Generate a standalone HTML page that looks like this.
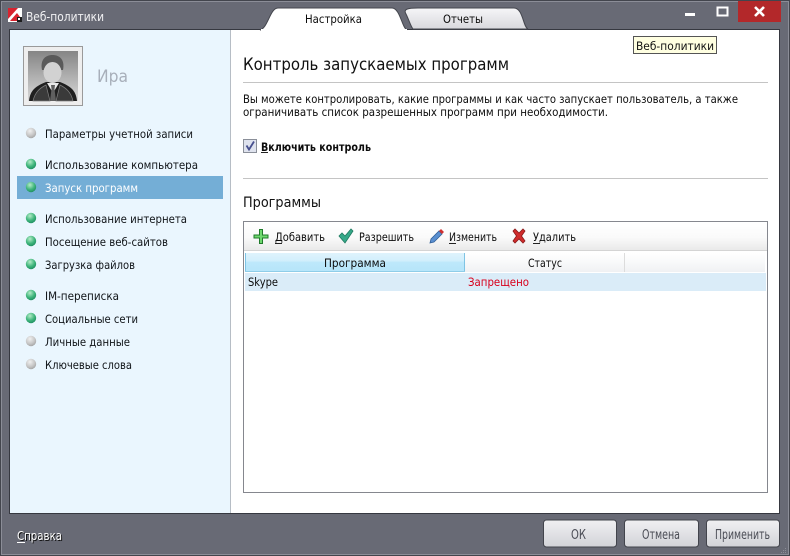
<!DOCTYPE html>
<html><head><meta charset="utf-8"><style>
html,body{margin:0;padding:0;background:#686a75}
svg{display:block}
text{font-family:"DejaVu Sans","Liberation Sans",sans-serif;font-size:11.5px;fill:#0c0c0c}
.s text{fill:#101418}
</style></head><body>
<svg width="790" height="556" viewBox="0 0 790 556" xmlns="http://www.w3.org/2000/svg">
<defs>
<radialGradient id="g" cx=".4" cy=".3" r=".8"><stop offset="0" stop-color="#b5ecc8"/><stop offset=".55" stop-color="#3fb57c"/><stop offset="1" stop-color="#16855a"/></radialGradient>
<radialGradient id="w" cx=".4" cy=".3" r=".8"><stop offset="0" stop-color="#f0f0f0"/><stop offset=".6" stop-color="#c4c4c4"/><stop offset="1" stop-color="#9a9a9a"/></radialGradient>
<linearGradient id="tb" x1="0" y1="0" x2="0" y2="1"><stop offset="0" stop-color="#fff"/><stop offset=".55" stop-color="#fafafa"/><stop offset="1" stop-color="#e9e9e9"/></linearGradient>
<linearGradient id="hs" x1="0" y1="0" x2="0" y2="1"><stop offset="0" stop-color="#dff3fc"/><stop offset=".4" stop-color="#d2effc"/><stop offset=".5" stop-color="#bde8fb"/><stop offset="1" stop-color="#b6e5fa"/></linearGradient>
<linearGradient id="hn" x1="0" y1="0" x2="0" y2="1"><stop offset="0" stop-color="#fff"/><stop offset=".5" stop-color="#f8f9fa"/><stop offset="1" stop-color="#f0f1f3"/></linearGradient>
<linearGradient id="tab2" x1="0" y1="0" x2="0" y2="1"><stop offset="0" stop-color="#f6f6f8"/><stop offset="1" stop-color="#d8d8dd"/></linearGradient>
<linearGradient id="btn" x1="0" y1="0" x2="0" y2="1"><stop offset="0" stop-color="#f0f0f2"/><stop offset="1" stop-color="#d2d3d8"/></linearGradient>
<linearGradient id="av" x1="0" y1="0" x2="0" y2="1"><stop offset="0" stop-color="#858585"/><stop offset="1" stop-color="#d8d8d8"/></linearGradient>
</defs>

<!-- window frame -->
<rect width="790" height="556" fill="#686a75"/>
<rect x=".5" y=".5" width="789" height="555" fill="none" stroke="#43454d"/>
<rect x="1.5" y="1.5" width="787" height="553" fill="none" stroke="#8b8d97"/>

<!-- logo -->
<rect x="8" y="8" width="14" height="14" fill="#fff"/>
<path d="M8 8h10L8 19z" fill="#d8232f"/>
<path d="M10 21l7-8 3 4-2 4z" fill="#d8232f"/>
<rect x="17" y="17" width="5" height="5" fill="#1c1c1c"/>
<rect x="18" y="18" width="2" height="2" fill="#fff"/>
<text x="26" y="21" textLength="78" lengthAdjust="spacingAndGlyphs" style="font-size:12px;fill:#f1f1f3">Веб-политики</text>

<!-- window controls -->
<rect x="685" y="13" width="10" height="3" fill="#fff"/>
<rect x="717.500" y="7.500" width="10" height="8" fill="none" stroke="#fff" stroke-width="2"/>
<rect x="738" y="1" width="43" height="21" fill="#b3282a"/>
<path d="M755 7l9 9M764 7l-9 9" stroke="#fff" stroke-width="2.600"/>

<!-- content -->
<rect x="9.500" y="29.500" width="770" height="484" fill="#fff" stroke="#363840"/>
<rect x="10" y="30" width="220" height="483" fill="#eaf6fe"/>
<rect x="230" y="30" width="1" height="483" fill="#b6bdc5"/>

<!-- tabs -->
<path d="M407 30 C402 28 400 8 392 8 H278 C270 8 268 28 260 30Z" fill="#fff" stroke="#44464e"/>
<rect x="261" y="29" width="146" height="2" fill="#fff"/>
<path d="M528 29 C523 27 523 8 514 8 H418 C408 8 403 9 406 14 C409 20 411 27 413 29Z" fill="url(#tab2)" stroke="#44464e"/>
<text x="305" y="23" textLength="57" lengthAdjust="spacingAndGlyphs">Настройка</text>
<text x="443" y="23" textLength="40" lengthAdjust="spacingAndGlyphs">Отчеты</text>

<!-- tooltip -->
<rect x="633.500" y="36.500" width="83" height="17" fill="#ffffe1" stroke="#555"/>
<text x="636" y="50" textLength="78" lengthAdjust="spacingAndGlyphs" style="fill:#111">Веб-политики</text>

<!-- avatar -->
<rect x="23.500" y="46.500" width="59" height="59" fill="#eee" stroke="#9a9a9a"/>
<rect x="28" y="51" width="50" height="50" fill="url(#av)"/>
<path d="M29 101 C30 90 36 86 46 82 H60 C70 86 76 90 77 101Z" fill="#1f1f1f"/>
<path d="M33 101 C35 92 40 88 46 85 L50 101Z M73 101 C71 92 66 88 60 85 L56 101Z" fill="#3a3a3a" stroke="#808080" stroke-width=".7"/>
<path d="M47 83 L53 93 L59 83Z" fill="#eaeaea"/>
<path d="M51 85 H55 L54.500 89 L56 101 H50 L51.500 89Z" fill="#5f5f5f"/>
<path d="M42 70 C40 60 45 55 52.500 55 C60 55 65 60 63 70Z" fill="#5a5a5a"/>
<ellipse cx="52.500" cy="72.500" rx="9" ry="10.500" fill="#d2d2d2"/>
<text x="97" y="82" textLength="31" lengthAdjust="spacingAndGlyphs" style="font-size:17px;fill:#a8afba">Ира</text>

<!-- sidebar -->
<rect x="17" y="176" width="206" height="23" fill="#74aed6"/>
<g>
<circle cx="31" cy="133" r="5.200" fill="url(#w)"/>
<circle cx="31" cy="164" r="5.200" fill="url(#g)"/>
<circle cx="31" cy="187" r="5.200" fill="url(#g)"/>
<circle cx="31" cy="218" r="5.200" fill="url(#g)"/>
<circle cx="31" cy="241" r="5.200" fill="url(#g)"/>
<circle cx="31" cy="264" r="5.200" fill="url(#g)"/>
<circle cx="31" cy="295" r="5.200" fill="url(#g)"/>
<circle cx="31" cy="318" r="5.200" fill="url(#g)"/>
<circle cx="31" cy="341" r="5.200" fill="url(#w)"/>
<circle cx="31" cy="364" r="5.200" fill="url(#w)"/>
</g>
<g class="s">
<text x="45" y="138" textLength="148" lengthAdjust="spacingAndGlyphs">Параметры учетной записи</text>
<text x="45" y="169" textLength="153" lengthAdjust="spacingAndGlyphs">Использование компьютера</text>
<text x="45" y="192" textLength="93" lengthAdjust="spacingAndGlyphs" style="fill:#fff">Запуск программ</text>
<text x="45" y="223" textLength="142" lengthAdjust="spacingAndGlyphs">Использование интернета</text>
<text x="45" y="246" textLength="123" lengthAdjust="spacingAndGlyphs">Посещение веб-сайтов</text>
<text x="45" y="269" textLength="90" lengthAdjust="spacingAndGlyphs">Загрузка файлов</text>
<text x="45" y="300" textLength="74" lengthAdjust="spacingAndGlyphs">IM-переписка</text>
<text x="45" y="323" textLength="93" lengthAdjust="spacingAndGlyphs">Социальные сети</text>
<text x="45" y="346" textLength="85" lengthAdjust="spacingAndGlyphs">Личные данные</text>
<text x="45" y="369" textLength="87" lengthAdjust="spacingAndGlyphs">Ключевые слова</text>
</g>

<!-- main -->
<text x="243" y="70" textLength="266" lengthAdjust="spacingAndGlyphs" style="font-size:17px;fill:#111">Контроль запускаемых программ</text>
<rect x="243" y="82" width="525" height="1" fill="#c4c4c4"/>
<text x="243" y="103" textLength="495" lengthAdjust="spacingAndGlyphs">Вы можете контролировать, какие программы и как часто запускает пользователь, а также</text>
<text x="243" y="116" textLength="365" lengthAdjust="spacingAndGlyphs">ограничивать список разрешенных программ при необходимости.</text>

<rect x="243.500" y="139.500" width="13" height="13" fill="#dfe3ee" stroke="#8a8f99"/>
<path d="M246.500 145.500l2.500 4 5-8" fill="none" stroke="#47508f" stroke-width="1.800"/>
<text x="261" y="151" textLength="110" lengthAdjust="spacingAndGlyphs" style="font-weight:bold">Включить контроль</text>
<rect x="261" y="152" width="7" height="1" fill="#222"/>

<rect x="243" y="178" width="525" height="1" fill="#c4c4c4"/>
<text x="243" y="207" textLength="78" lengthAdjust="spacingAndGlyphs" style="font-size:14.500px;fill:#111">Программы</text>

<!-- table box -->
<rect x="243.500" y="221.500" width="524" height="271" fill="#fff" stroke="#85878e"/>
<rect x="244" y="222" width="523" height="28" fill="url(#tb)"/>
<rect x="244" y="250" width="523" height="1" fill="#d4d4d4"/>

<path d="M259.500 229.500h3v5.500h5.500v3h-5.500v5.500h-3v-5.500h-5.500v-3h5.500z" fill="#6fd86f" stroke="#1f7a2a"/>
<text x="275" y="241" textLength="50" lengthAdjust="spacingAndGlyphs">Добавить</text>
<rect x="275" y="243" width="7" height="1" fill="#222"/>
<path d="M339 236l3-3 3 3 6-7 2 2-8 12z" fill="#35a888" stroke="#1f7a60" stroke-width=".8"/>
<text x="359" y="241" textLength="55" lengthAdjust="spacingAndGlyphs">Разрешить</text>
<path d="M430 243l1-4 8-8 3 3-8 8z" fill="#5a8fd0" stroke="#2f5f99" stroke-width=".8"/>
<path d="M439 231l2-2 3 3-2 2z" fill="#d03030"/>
<text x="449" y="241" textLength="48" lengthAdjust="spacingAndGlyphs">Изменить</text>
<rect x="449" y="243" width="7" height="1" fill="#222"/>
<path d="M513 231l2-2 4 4 4-4 2 2-3.500 5 3.500 5-2 2-4-4-4 4-2-2 3.500-5z" fill="#d02c2c" stroke="#8a1a1a" stroke-width=".8"/>
<text x="533" y="241" textLength="43" lengthAdjust="spacingAndGlyphs">Удалить</text>
<rect x="533" y="243" width="7" height="1" fill="#222"/>

<rect x="245" y="253" width="220" height="19" fill="url(#hs)"/>
<rect x="245" y="253" width="1" height="19" fill="#7fc4e4"/>
<rect x="464" y="253" width="1" height="19" fill="#7fc4e4"/>
<rect x="245" y="271" width="220" height="1" fill="#8fcde8"/>
<rect x="465" y="253" width="300" height="19" fill="url(#hn)"/>
<rect x="624" y="253" width="1" height="19" fill="#dcdcdc"/>
<text x="324" y="267" textLength="62" lengthAdjust="spacingAndGlyphs">Программа</text>
<text x="528" y="267" textLength="34" lengthAdjust="spacingAndGlyphs">Статус</text>
<rect x="245" y="273" width="521" height="18" fill="#daecf8"/>
<text x="248" y="286" textLength="30" lengthAdjust="spacingAndGlyphs">Skype</text>
<text x="468" y="286" textLength="61" lengthAdjust="spacingAndGlyphs" style="fill:#d8001c">Запрещено</text>

<!-- footer -->
<text x="18" y="541" textLength="45" lengthAdjust="spacingAndGlyphs" style="font-size:12px;fill:#111">Справка</text>
<text x="17" y="540" textLength="45" lengthAdjust="spacingAndGlyphs" style="font-size:12px;fill:#fff">Справка</text>
<rect x="17" y="542" width="8" height="1" fill="#fff"/>

<g stroke="#42444c" fill="url(#btn)">
<rect x="543.500" y="520" width="73" height="27" rx="3"/>
<rect x="624.500" y="520" width="74" height="27" rx="3"/>
<rect x="706.500" y="520" width="73" height="27" rx="3"/>
</g>
<text x="571" y="539" textLength="15" lengthAdjust="spacingAndGlyphs" style="font-size:13px;fill:#4a4c55">ОК</text>
<text x="642" y="539" textLength="38" lengthAdjust="spacingAndGlyphs" style="font-size:13px;fill:#4a4c55">Отмена</text>
<text x="715" y="539" textLength="55" lengthAdjust="spacingAndGlyphs" style="font-size:13px;fill:#4a4c55">Применить</text>
<g fill="#8b8d97">
<rect x="785" y="548" width="1" height="1"/><rect x="783" y="550" width="1" height="1"/><rect x="785" y="550" width="1" height="1"/><rect x="781" y="552" width="1" height="1"/><rect x="783" y="552" width="1" height="1"/><rect x="785" y="552" width="1" height="1"/>
</g>
</svg>
</body></html>
